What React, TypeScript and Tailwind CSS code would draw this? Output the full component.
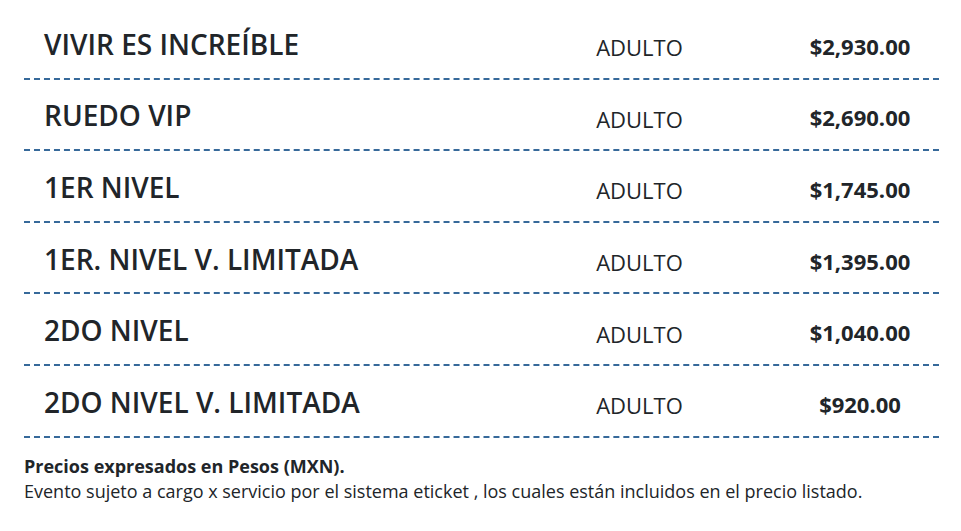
import React from "react";

interface Row {
  zone: string;
  type: string;
  price: string;
}

const rows: Row[] = [
  { zone: "VIVIR ES INCREÍBLE", type: "ADULTO", price: "$2,930.00" },
  { zone: "RUEDO VIP", type: "ADULTO", price: "$2,690.00" },
  { zone: "1ER NIVEL", type: "ADULTO", price: "$1,745.00" },
  { zone: "1ER. NIVEL V. LIMITADA", type: "ADULTO", price: "$1,395.00" },
  { zone: "2DO NIVEL", type: "ADULTO", price: "$1,040.00" },
  { zone: "2DO NIVEL V. LIMITADA", type: "ADULTO", price: "$920.00" },
];

const App: React.FC = () => {
  return (
    <div
      className="w-full min-h-screen bg-white pl-6 pr-[22px] pt-2 text-[#212529]"
      style={{ fontFamily: '"Open Sans", "Liberation Sans", sans-serif' }}
    >
      {/* price table */}
      <div className="flex flex-col">
        {rows.map((row) => (
          <div
            key={row.zone}
            className="grid grid-cols-[474px_283px_158px] h-[69.6px] items-center border-b-2 border-dashed border-[#36699a] box-content"
          >
            <div className="pl-5 pt-[2px] text-[28px] font-semibold leading-none whitespace-nowrap">
              {row.zone}
            </div>
            <div className="text-center text-[22px] leading-none pt-[9px]">
              {row.type}
            </div>
            <div className="text-center text-[22px] font-bold leading-none pt-1.5">
              {row.price}
            </div>
          </div>
        ))}
      </div>

      <div className="mt-4 text-[18px] leading-[25px]">
        <p className="font-bold">Precios expresados en Pesos (MXN).</p>
        <p>
          Evento sujeto a cargo x servicio por el sistema eticket , los cuales
          están incluidos en el precio listado.
        </p>
      </div>
    </div>
  );
};

export default App;
